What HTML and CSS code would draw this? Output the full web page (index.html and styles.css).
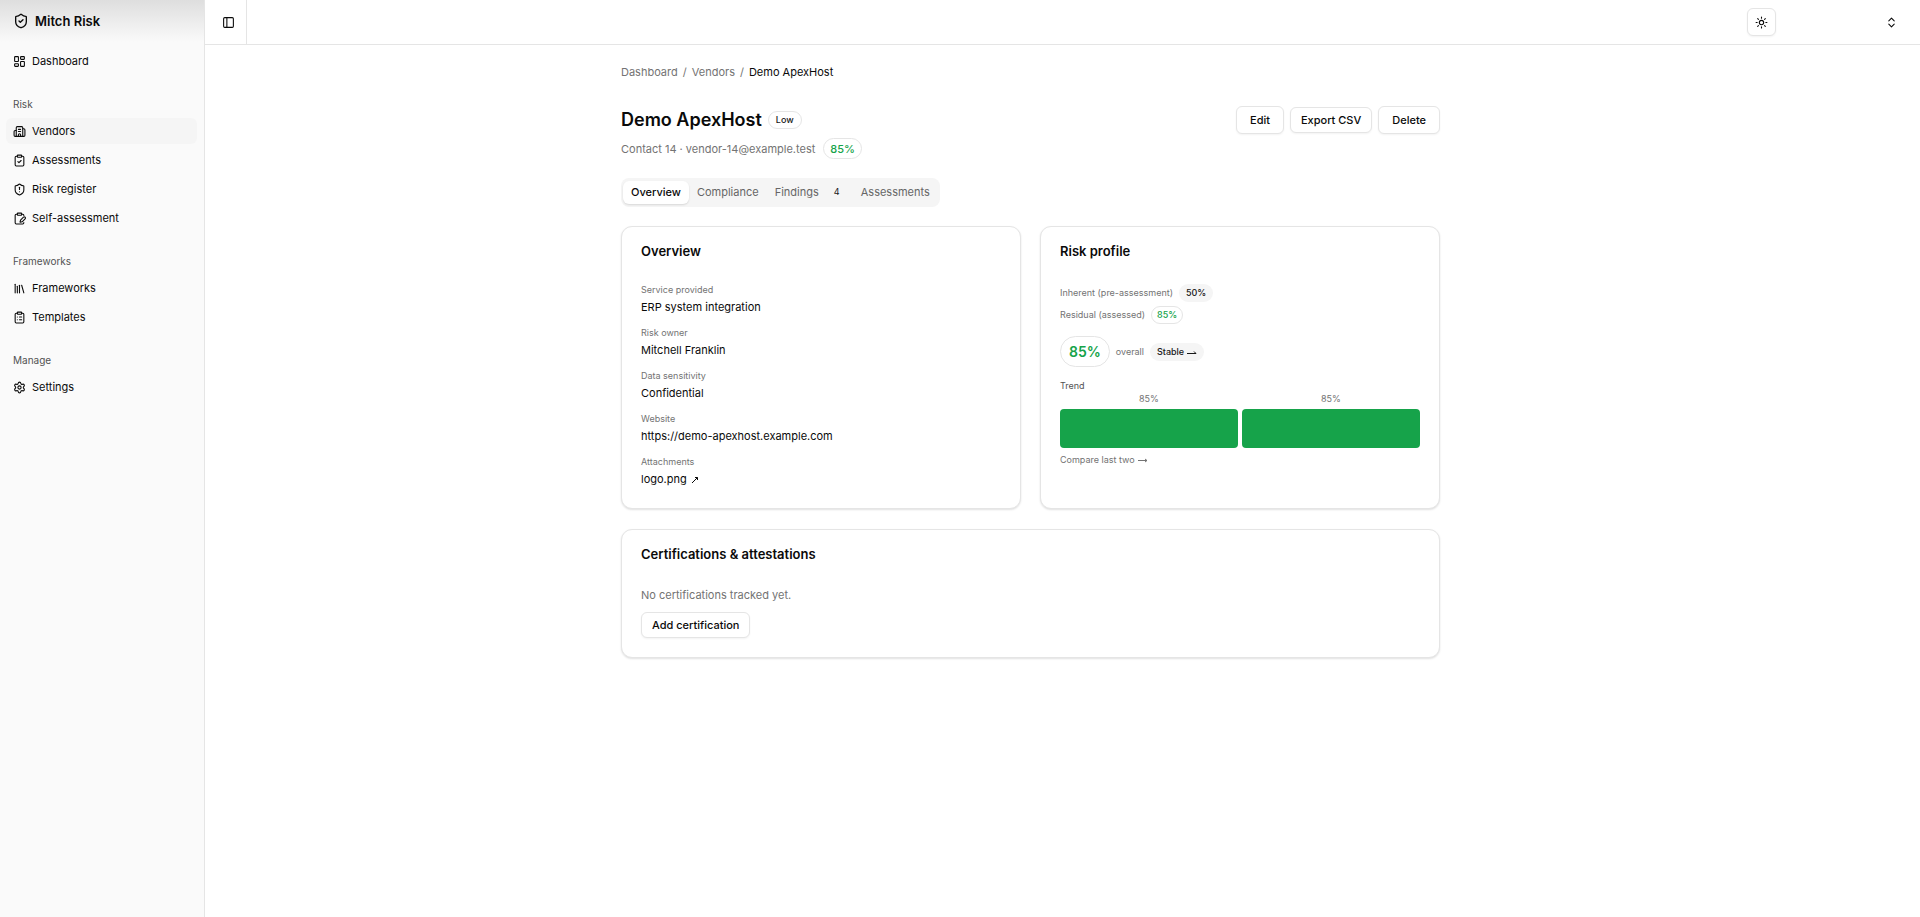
FILE: index.html
```html
<!DOCTYPE html>
<html lang="en">
<head>
    <meta charset="UTF-8">
    <meta name="viewport" content="width=device-width, initial-scale=1.0">
    <title>Demo ApexHost - Mitch Risk</title>
    <link rel="stylesheet" href="styles.css">
</head>
<body>
<div class="layout">
    <aside class="sidebar">
        <a class="brand" href="#">
            <svg class="icon icon-brand" viewBox="0 0 24 24"><path d="M20 13c0 5-3.5 7.5-7.66 8.95a1 1 0 0 1-.67-.01C7.5 20.5 4 18 4 13V6a1 1 0 0 1 1-1c2 0 4.5-1.2 6.24-2.72a1.17 1.17 0 0 1 1.52 0C14.51 3.81 17 5 19 5a1 1 0 0 1 1 1z"/><path d="m9 12 2 2 4-4"/></svg>
            Mitch Risk
        </a>
        <nav class="nav">
            <div class="nav-group">
                <a class="nav-item" href="#">
                    <svg class="icon" viewBox="0 0 24 24"><rect width="7" height="9" x="3" y="3" rx="1"/><rect width="7" height="5" x="14" y="3" rx="1"/><rect width="7" height="9" x="14" y="12" rx="1"/><rect width="7" height="5" x="3" y="16" rx="1"/></svg>
                    Dashboard
                </a>
            </div>
            <div class="nav-group">
                <div class="nav-label">Risk</div>
                <a class="nav-item active" href="#">
                    <svg class="icon" viewBox="0 0 24 24"><path d="M10 12h4"/><path d="M10 8h4"/><path d="M14 21v-3a2 2 0 0 0-4 0v3"/><path d="M6 10H4a2 2 0 0 0-2 2v7a2 2 0 0 0 2 2h16a2 2 0 0 0 2-2V9a2 2 0 0 0-2-2h-2"/><path d="M6 21V5a2 2 0 0 1 2-2h8a2 2 0 0 1 2 2v16"/></svg>
                    Vendors
                </a>
                <a class="nav-item" href="#">
                    <svg class="icon" viewBox="0 0 24 24"><rect width="8" height="4" x="8" y="2" rx="1"/><path d="M16 4h2a2 2 0 0 1 2 2v14a2 2 0 0 1-2 2H6a2 2 0 0 1-2-2V6a2 2 0 0 1 2-2h2"/><path d="m9 14 2 2 4-4"/></svg>
                    Assessments
                </a>
                <a class="nav-item" href="#">
                    <svg class="icon" viewBox="0 0 24 24"><path d="M20 13c0 5-3.5 7.5-7.66 8.95a1 1 0 0 1-.67-.01C7.5 20.5 4 18 4 13V6a1 1 0 0 1 1-1c2 0 4.5-1.2 6.24-2.72a1.17 1.17 0 0 1 1.52 0C14.51 3.81 17 5 19 5a1 1 0 0 1 1 1z"/><path d="M12 8v4"/><path d="M12 16h.01"/></svg>
                    Risk register
                </a>
                <a class="nav-item" href="#">
                    <svg class="icon" viewBox="0 0 24 24"><rect width="8" height="4" x="8" y="2" rx="1"/><path d="M16 4h2a2 2 0 0 1 2 2v.5"/><path d="M8 4H6a2 2 0 0 0-2 2v14a2 2 0 0 0 2 2h12a2 2 0 0 0 2-2v-.5"/><path d="M21.34 15.66a1 1 0 1 0-3-3l-5 5a2 2 0 0 0-.5.84l-.84 2.87a.5.5 0 0 0 .62.62l2.87-.84a2 2 0 0 0 .85-.5z" transform="translate(1 -3)"/></svg>
                    Self-assessment
                </a>
            </div>
            <div class="nav-group">
                <div class="nav-label">Frameworks</div>
                <a class="nav-item" href="#">
                    <svg class="icon" viewBox="0 0 24 24"><path d="m16 6 4 14"/><path d="M12 6v14"/><path d="M8 8v12"/><path d="M4 4v16"/></svg>
                    Frameworks
                </a>
                <a class="nav-item" href="#">
                    <svg class="icon" viewBox="0 0 24 24"><rect width="8" height="4" x="8" y="2" rx="1"/><path d="M16 4h2a2 2 0 0 1 2 2v14a2 2 0 0 1-2 2H6a2 2 0 0 1-2-2V6a2 2 0 0 1 2-2h2"/><path d="M12 11h4"/><path d="M12 16h4"/><path d="M8 11h.01"/><path d="M8 16h.01"/></svg>
                    Templates
                </a>
            </div>
            <div class="nav-group">
                <div class="nav-label">Manage</div>
                <a class="nav-item" href="#">
                    <svg class="icon" viewBox="0 0 24 24"><path d="M9.671 4.136a2.34 2.34 0 0 1 4.659 0 2.34 2.34 0 0 0 3.319 1.915 2.34 2.34 0 0 1 2.33 4.033 2.34 2.34 0 0 0 0 3.831 2.34 2.34 0 0 1-2.33 4.033 2.34 2.34 0 0 0-3.319 1.915 2.34 2.34 0 0 1-4.659 0 2.34 2.34 0 0 0-3.32-1.915 2.34 2.34 0 0 1-2.33-4.033 2.34 2.34 0 0 0 0-3.831A2.34 2.34 0 0 1 6.35 6.051a2.34 2.34 0 0 0 3.319-1.915"/><circle cx="12" cy="12" r="3"/></svg>
                    Settings
                </a>
            </div>
        </nav>
    </aside>

    <div class="page">
        <header class="topbar">
            <button class="sidebar-toggle" aria-label="Toggle sidebar">
                <svg class="icon" viewBox="0 0 24 24"><rect width="18" height="18" x="3" y="3" rx="2"/><path d="M9 3v18"/></svg>
            </button>
            <div class="topbar-right">
                <button class="btn theme-btn" aria-label="Toggle theme">
                    <svg class="icon" viewBox="0 0 24 24"><circle cx="12" cy="12" r="4"/><path d="M12 2v2"/><path d="M12 20v2"/><path d="m4.93 4.93 1.41 1.41"/><path d="m17.66 17.66 1.41 1.41"/><path d="M2 12h2"/><path d="M20 12h2"/><path d="m6.34 17.66-1.41 1.41"/><path d="m19.07 4.93-1.41 1.41"/></svg>
                </button>
                <button class="account-btn" aria-label="Account menu">
                    <svg class="icon" viewBox="0 0 24 24"><path d="m7 15 5 5 5-5"/><path d="m7 9 5-5 5 5"/></svg>
                </button>
            </div>
        </header>

        <main class="main">
            <div class="container">
                <nav class="breadcrumbs" aria-label="Breadcrumb">
                    <a href="#">Dashboard</a><span>/</span><a href="#">Vendors</a><span>/</span><span class="current">Demo ApexHost</span>
                </nav>

                <div class="page-head">
                    <div>
                        <div class="title-row">
                            <h1>Demo ApexHost</h1>
                            <span class="badge badge-outline">Low</span>
                        </div>
                        <div class="subtitle">
                            <span>Contact 14 · vendor-14@example.test</span>
                            <span class="score score-md">85%</span>
                        </div>
                    </div>
                    <div class="actions">
                        <button class="btn btn-lg">Edit</button>
                        <button class="btn">Export CSV</button>
                        <button class="btn btn-lg">Delete</button>
                    </div>
                </div>

                <div class="tabs" role="tablist">
                    <button class="tab active" role="tab" aria-selected="true">Overview</button>
                    <button class="tab" role="tab">Compliance</button>
                    <button class="tab" role="tab">Findings <span class="tab-count">4</span></button>
                    <button class="tab" role="tab">Assessments</button>
                </div>

                <div class="cards">
                    <section class="card">
                        <h2>Overview</h2>
                        <dl class="details">
                            <div><dt>Service provided</dt><dd>ERP system integration</dd></div>
                            <div><dt>Risk owner</dt><dd>Mitchell Franklin</dd></div>
                            <div><dt>Data sensitivity</dt><dd>Confidential</dd></div>
                            <div><dt>Website</dt><dd><a href="#">https://demo-apexhost.example.com</a></dd></div>
                            <div><dt>Attachments</dt><dd><a class="file-link" href="#">logo.png <svg class="arrow-ne" viewBox="0 0 8 8"><path d="M1 7 6.5 1.5M4 1.5h2.5V4"/></svg></a></dd></div>
                        </dl>
                    </section>

                    <section class="card">
                        <h2>Risk profile</h2>
                        <div class="risk">
                            <div class="risk-levels">
                                <div class="risk-row">Inherent (pre-assessment) <span class="badge badge-muted">50%</span></div>
                                <div class="risk-row">Residual (assessed) <span class="score score-sm">85%</span></div>
                            </div>
                            <div class="risk-row">
                                <span class="score score-lg">85%</span>
                                overall
                                <span class="badge badge-muted">Stable <svg class="arrow" viewBox="0 0 10 8"><path d="M0 5.500h9M7 3.500l2 2"/></svg></span>
                            </div>
                            <div class="trend">
                                <div class="trend-title">Trend</div>
                                <div class="trend-bars">
                                    <div class="trend-col">85%<div class="trend-bar"></div></div>
                                    <div class="trend-col">85%<div class="trend-bar"></div></div>
                                </div>
                                <a class="compare" href="#">Compare last two <svg class="arrow" viewBox="0 0 10 8"><path d="M0 4.500h9M7 3l2 1.500-2 1.500"/></svg></a>
                            </div>
                        </div>
                    </section>
                </div>

                <section class="card">
                    <h2>Certifications &amp; attestations</h2>
                    <p class="empty">No certifications tracked yet.</p>
                    <button class="btn">Add certification</button>
                </section>
            </div>
        </main>
    </div>
</div>
</body>
</html>
```
FILE: styles.css
```css
* {
    box-sizing: border-box;
}
body {
    margin: 0;
    font-family: Inter, "Liberation Sans", sans-serif;
    font-size: 11px;
    line-height: 16px;
    color: #0a0a0a;
    background-color: #fff;
}
a {
    color: inherit;
    text-decoration: none;
}
button {
    font: inherit;
    color: inherit;
    cursor: pointer;
}
h1, h2, p, dl, dd {
    margin: 0;
}
.icon {
    width: 13px;
    height: 13px;
    flex-shrink: 0;
    fill: none;
    stroke: currentColor;
    stroke-width: 2;
    stroke-linecap: round;
    stroke-linejoin: round;
}
.layout {
    display: flex;
    min-height: 100vh;
}

/* Sidebar */
.sidebar {
    width: 205px;
    flex-shrink: 0;
    background-color: #fafafa;
    border-right: 1px solid #e5e5e5;
}
.brand {
    display: flex;
    align-items: center;
    gap: 6px;
    height: 42px;
    padding: 0 13px;
    font-size: 13px;
    font-weight: 600;
    background: linear-gradient(to bottom, #dedede, #fafafa);
}
.icon-brand {
    width: 16px;
    height: 16px;
}
.nav {
    display: flex;
    flex-direction: column;
    gap: 18px;
    padding: 6px 7px 6px 6px;
}
.nav-group {
    display: flex;
    flex-direction: column;
}
.nav-label {
    height: 26px;
    padding: 0 7px;
    font-size: 10px;
    line-height: 24px;
    color: #525252;
}
.nav-item {
    display: flex;
    align-items: center;
    gap: 6px;
    height: 26px;
    padding: 0 7px;
    border-radius: 6px;
}
.nav-item + .nav-item {
    margin-top: 3px;
}
.nav-item.active {
    background-color: #f5f5f5;
}

/* Top bar */
.page {
    flex: 1;
    min-width: 0;
}
.topbar {
    display: flex;
    justify-content: space-between;
    height: 45px;
    border-bottom: 1px solid #e5e5e5;
}
.sidebar-toggle {
    display: flex;
    align-items: center;
    justify-content: center;
    width: 42px;
    padding: 0 0 0 6px;
    background: none;
    border: none;
    border-right: 1px solid #e5e5e5;
}
.topbar-right {
    display: flex;
    align-items: center;
    gap: 6px;
    padding-right: 13px;
}
.account-btn {
    display: flex;
    align-items: center;
    justify-content: flex-end;
    width: 125px;
    height: 32px;
    padding: 0 9px;
    background: none;
    border: none;
}
.btn {
    display: inline-flex;
    align-items: center;
    justify-content: center;
    height: 26px;
    padding: 0 10px;
    font-weight: 500;
    background-color: #fff;
    border: 1px solid #e5e5e5;
    border-radius: 6px;
    box-shadow: 0 1px 2px rgba(0, 0, 0, 0.05);
}
.btn-lg {
    height: 28px;
    padding: 0 13px;
}
.theme-btn {
    width: 29px;
    height: 28px;
    padding: 0;
}

/* Page content */
.main {
    padding: 19px 83px 19px 19px;
}
.container {
    max-width: 819px;
    margin: 0 auto;
}
.breadcrumbs {
    display: flex;
    gap: 5px;
    color: #737373;
}
.breadcrumbs .current {
    color: #0a0a0a;
}
.page-head {
    display: flex;
    justify-content: space-between;
    align-items: flex-start;
    margin-top: 26px;
}
.title-row {
    display: flex;
    align-items: center;
    gap: 6px;
}
h1 {
    font-size: 18px;
    font-weight: 600;
    line-height: 28px;
}
.subtitle {
    display: flex;
    align-items: center;
    gap: 8px;
    margin-top: 4px;
    color: #737373;
}
.actions {
    display: flex;
    align-items: center;
    gap: 6px;
}
.badge {
    display: inline-flex;
    align-items: center;
    gap: 3px;
    height: 18px;
    padding: 0 7px;
    font-size: 9px;
    font-weight: 500;
    color: #171717;
    border-radius: 9px;
}
.badge-outline {
    border: 1px solid #e5e5e5;
}
.badge-muted {
    background-color: #f5f5f5;
}
.score {
    display: inline-flex;
    align-items: center;
    font-weight: 500;
    color: #16a34a;
    border: 1px solid #e5e5e5;
    border-radius: 16px;
}
.score-sm {
    height: 18px;
    padding: 0 5px;
    font-size: 9px;
}
.score-md {
    height: 21px;
    padding: 0 6px;
}
.score-lg {
    height: 31px;
    padding: 0 8px;
    font-size: 14px;
    font-weight: 600;
}

/* Tabs */
.tabs {
    display: inline-flex;
    height: 29px;
    margin-top: 19px;
    padding: 3px 2px;
    background-color: #f5f5f5;
    border-radius: 8px;
}
.tab {
    display: flex;
    align-items: center;
    padding: 0 8px 1px;
    color: #666;
    background: none;
    border: none;
    border-radius: 6px;
}
.tab.active {
    color: #0a0a0a;
    font-weight: 500;
    background-color: #fff;
    box-shadow: 0 1px 2px rgba(0, 0, 0, 0.12);
}
.tab-count {
    width: 16px;
    margin-left: 10px;
    font-size: 9px;
    color: #171717;
    text-align: center;
}

/* Cards */
.cards {
    display: grid;
    grid-template-columns: 1fr 1fr;
    gap: 19px;
    margin: 19px 0 20px;
}
.card {
    padding: 17px 19px 19px;
    background-color: #fff;
    border: 1px solid #e5e5e5;
    border-radius: 11px;
    box-shadow: 0 1px 2px rgba(0, 0, 0, 0.12);
}
h2 {
    margin-bottom: 24px;
    font-size: 13px;
    font-weight: 600;
    line-height: 14px;
}
.details {
    display: grid;
    gap: 9px;
}
dt {
    font-size: 9px;
    color: #737373;
}
dd {
    line-height: 18px;
}
.file-link {
    display: flex;
    align-items: center;
    gap: 4px;
    line-height: 19px;
}
.arrow-ne {
    width: 8px;
    height: 8px;
    fill: none;
    stroke: currentColor;
}
.arrow {
    width: 10px;
    height: 8px;
    fill: none;
    stroke: currentColor;
}
.risk {
    display: grid;
    gap: 12px;
    font-size: 9px;
    color: #737373;
}
.risk-levels {
    display: grid;
    gap: 4px;
    padding-top: 2px;
}
.risk-row {
    display: flex;
    align-items: center;
    gap: 6px;
}
.trend-title {
    line-height: 13px;
    color: #525252;
}
.trend-bars {
    display: flex;
    gap: 4px;
}
.trend-col {
    flex: 1;
    line-height: 14px;
    text-align: center;
}
.trend-bar {
    height: 39px;
    margin-top: 3px;
    background-color: #16a34a;
    border-radius: 4px;
}
.compare {
    display: flex;
    align-items: center;
    gap: 3px;
    margin-top: 4px;
}
.empty {
    padding-top: 2px;
    margin-bottom: 9px;
    color: #737373;
}
```
